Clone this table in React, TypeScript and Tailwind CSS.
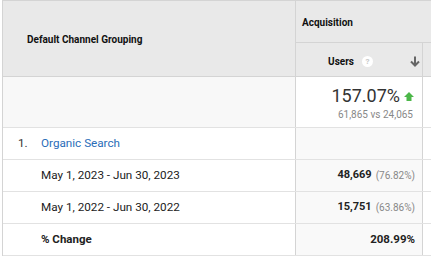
import React from 'react';

const rows = [
  { label: 'May 1, 2023 - Jun 30, 2023', value: '48,669', pct: '(76.82%)' },
  { label: 'May 1, 2022 - Jun 30, 2022', value: '15,751', pct: '(63.86%)' },
];

function HelpIcon() {
  return (
    <span className="inline-flex items-center justify-center w-[11px] h-[11px] rounded-full bg-white text-[8px] font-bold text-[#c8c8c8] leading-none">
      ?
    </span>
  );
}

function SortArrow() {
  return (
    <svg width="10" height="11" viewBox="0 0 10 11" className="block">
      <path d="M5 0.5 V9" stroke="#666" strokeWidth="2" fill="none" />
      <path d="M1 5.5 L5 9.5 L9 5.5" stroke="#666" strokeWidth="2" fill="none" />
    </svg>
  );
}

function UpArrow() {
  return (
    <svg width="10" height="9" viewBox="0 0 10 9" className="block">
      <path d="M5 0 L10 5 H7.5 V9 H2.5 V5 H0 Z" fill="#4cb749" />
    </svg>
  );
}

export default function App() {
  return (
    <div className="w-[431px] h-[257px] bg-white overflow-hidden pl-[2px] text-[#222]" style={{ fontFamily: 'Roboto, "Liberation Sans", sans-serif' }}>
      <div className="border-t border-l border-[#d4d4d4]">
        {/* ── Header ───────────────────────────── */}
        <div className="flex h-[76px] bg-[#e9e9e9] border-b border-[#d4d4d4]">
          <div className="w-[293px] shrink-0 border-r border-[#d4d4d4] flex items-center pl-[24px] pt-[2px]">
            <span className="text-[10px] font-bold text-[#111]">Default Channel Grouping</span>
          </div>
          <div className="flex-1 flex flex-col">
            <div className="h-[42px] border-b border-[#d4d4d4] flex items-center pl-[6px] pt-[1px]">
              <span className="text-[10px] font-bold text-[#111]">Acquisition</span>
            </div>
            <div className="flex flex-1">
              <div className="w-[127px] shrink-0 border-r border-[#d4d4d4] flex items-center justify-end pr-[2px] pt-[4px] gap-[8px]">
                <span className="text-[10px] font-bold text-[#111]">Users</span>
                <HelpIcon />
                <span className="ml-[29px]"><SortArrow /></span>
              </div>
              <div className="flex-1" />
            </div>
          </div>
        </div>

        {/* ── Summary row ──────────────────────── */}
        <div className="flex h-[51px] border-b border-[#e2e2e2]">
          <div className="w-[293px] shrink-0 bg-[#f8f8f8] border-r border-[#d4d4d4]" />
          <div className="w-[127px] shrink-0 bg-white border-r border-[#d4d4d4] flex flex-col items-end pr-[8px] pt-[8px]">
            <div className="flex items-center gap-[4px]">
              <span className="text-[18px] leading-[22px] text-[#333]">157.07%</span>
              <UpArrow />
            </div>
            <span className="text-[10px] leading-[13px] pt-[1px] text-[#888] mr-[1px]">61,865 vs 24,065</span>
          </div>
          <div className="flex-1" />
        </div>

        {/* ── Channel row ──────────────────────── */}
        <div className="flex h-[32px] border-b border-[#e2e2e2]">
          <div className="w-[293px] shrink-0 border-r border-[#d4d4d4] flex items-center pl-[15px] text-[11.7px]">
            <span className="w-[23px] text-[#333]">1.</span>
            <span className="text-[#2a6db8]">Organic Search</span>
          </div>
          <div className="w-[127px] shrink-0 bg-[#f9f9f9] border-r border-[#d4d4d4]" />
          <div className="flex-1" />
        </div>

        {rows.map(r => (
          <div key={r.label} className="flex h-[32px] border-b border-[#e2e2e2]">
            <div className="w-[293px] shrink-0 border-r border-[#d4d4d4] flex items-center pl-[38px]">
              <span className="text-[11.7px]">{r.label}</span>
            </div>
            <div className="w-[127px] shrink-0 bg-[#f9f9f9] border-r border-[#d4d4d4] flex items-center justify-end pr-[7px] gap-[4px]">
              <span className="text-[11px] font-bold">{r.value}</span>
              <span className="text-[10px] text-[#888]">{r.pct}</span>
            </div>
            <div className="flex-1" />
          </div>
        ))}

        <div className="flex h-[32px] border-b border-[#e2e2e2]">
          <div className="w-[293px] shrink-0 border-r border-[#d4d4d4] flex items-center pl-[38px]">
            <span className="text-[11.5px] font-bold">% Change</span>
          </div>
          <div className="w-[127px] shrink-0 bg-[#f9f9f9] border-r border-[#d4d4d4] flex items-center justify-end pr-[7px]">
            <span className="text-[11.5px] font-bold">208.99%</span>
          </div>
          <div className="flex-1" />
        </div>
      </div>
    </div>
  );
}
